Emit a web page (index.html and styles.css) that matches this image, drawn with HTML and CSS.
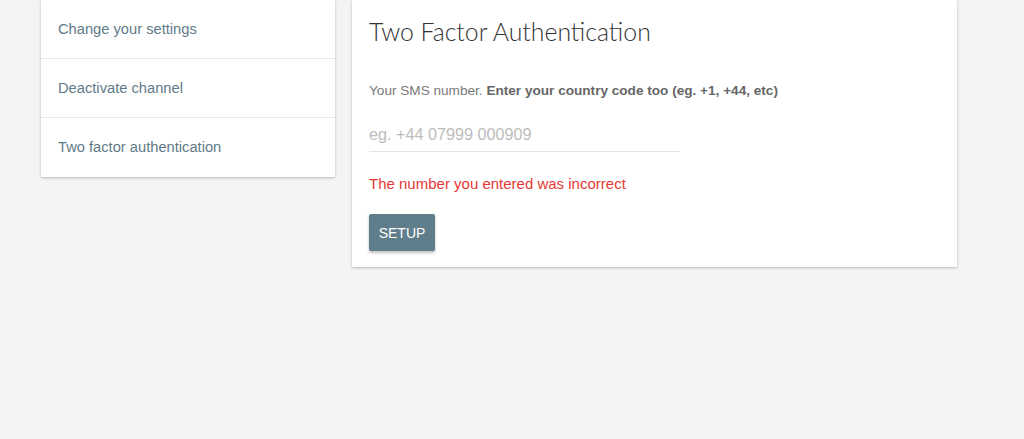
FILE: index.html
```html
<!DOCTYPE html>
<html>
<head>
<meta charset="utf-8">
<link rel="stylesheet" href="styles.css">
</head>
<body>
<div class="page">
  <nav class="side-card">
    <a class="side-item">Change your settings</a>
    <a class="side-item">Deactivate channel</a>
    <a class="side-item">Two factor authentication</a>
  </nav>
  <section class="main-card">
    <h1 class="title">Two Factor Authentication</h1>
    <p class="help">Your SMS number. <strong>Enter your country code too (eg. +1, +44, etc)</strong></p>
    <input class="phone" type="text" placeholder="eg. +44 07999 000909">
    <p class="error">The number you entered was incorrect</p>
    <button class="btn">SETUP</button>
  </section>
</div>
</body>
</html>
```
FILE: styles.css
```css
html, body {
  margin: 0;
  padding: 0;
  background: #f4f4f4;
  height: 100%;
}
.page {
  display: flex;
  align-items: flex-start;
  gap: 17px;
  padding-left: 41px;
}
.side-card {
  width: 294px;
  background: #fff;
  box-shadow: 0 1px 3px rgba(0,0,0,0.18), 0 1px 2px rgba(0,0,0,0.08);
  display: flex;
  flex-direction: column;
}
.side-item {
  display: flex;
  align-items: center;
  height: 58px;
  padding-left: 17px;
  padding-bottom: 1px;
  box-sizing: border-box;
  height: 59px;
  border-bottom: 1px solid #e6e6e6;
  font-family: "Liberation Sans", Arial, sans-serif;
  font-size: 14.7px;
  color: #5f7a88;
}
.side-item:last-child {
  border-bottom: none;
}
.main-card {
  width: 570px;
  background: #fff;
  padding: 17px 18px 16px 17px;
  box-shadow: 0 1px 3px rgba(0,0,0,0.18), 0 1px 2px rgba(0,0,0,0.08);
  display: flex;
  flex-direction: column;
  align-items: flex-start;
}
.title {
  margin: 0;
  font-family: Lato, sans-serif;
  font-weight: 300;
  font-size: 24.8px;
  line-height: 30px;
  color: #333;
}
.help {
  margin: 36px 0 0 0;
  font-family: "Liberation Sans", Arial, sans-serif;
  font-size: 13.6px;
  line-height: 16px;
  color: #7a7a7a;
}
.help strong {
  color: #666;
  font-weight: bold;
}
.phone {
  margin-top: 18px;
  width: 311px;
  box-sizing: border-box;
  height: 35px;
  border: none;
  border-bottom: 1px solid #e2e2e2;
  padding: 0;
  outline: none;
  font-family: "Liberation Sans", Arial, sans-serif;
  font-size: 16.2px;
  color: #333;
  background: transparent;
}
.phone::placeholder {
  color: #bdbdbd;
}
.error {
  margin: 23px 0 0 0;
  font-family: "Liberation Sans", Arial, sans-serif;
  font-size: 15px;
  line-height: 18px;
  color: #e53935;
}
.btn {
  margin-top: 21px;
  width: 66px;
  height: 37px;
  border: none;
  border-radius: 2px;
  background: #607d8b;
  color: #fff;
  font-family: "Liberation Sans", Arial, sans-serif;
  font-size: 14px;
  padding: 0;
  box-shadow: 0 2px 3px rgba(0,0,0,0.25);
}
```
